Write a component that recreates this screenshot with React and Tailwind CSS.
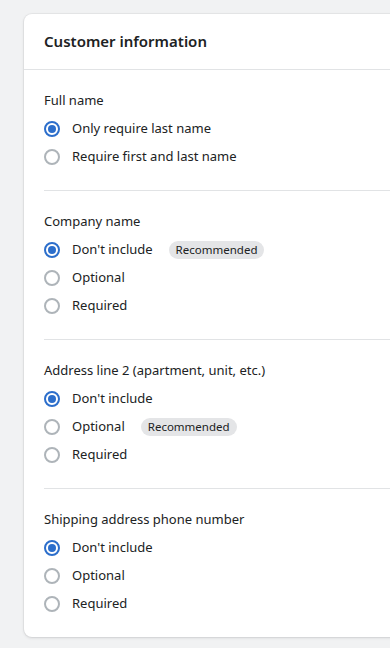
import React, { useState } from "react";

const sections = [
  {
    id: "fullName",
    label: "Full name",
    options: ["Only require last name", "Require first and last name"],
    initial: 0,
  },
  {
    id: "company",
    label: "Company name",
    options: ["Don't include", "Optional", "Required"],
    initial: 0,
    recommended: 0,
  },
  {
    id: "address2",
    label: "Address line 2 (apartment, unit, etc.)",
    options: ["Don't include", "Optional", "Required"],
    initial: 0,
    recommended: 1,
  },
  {
    id: "phone",
    label: "Shipping address phone number",
    options: ["Don't include", "Optional", "Required"],
    initial: 0,
  },
];

function Radio({ checked }) {
  return checked ? (
    <span className="flex h-4 w-4 items-center justify-center rounded-full border-2 border-[#2c6ecb] bg-white">
      <span className="h-2 w-2 rounded-full bg-[#2c6ecb]" />
    </span>
  ) : (
    <span className="h-4 w-4 rounded-full border-2 border-[#aeb4b9] bg-white" />
  );
}

function Section({ section, first }) {
  const [value, setValue] = useState(section.initial);

  return (
    <div className="pl-5">
      <div className={first ? "pt-5 pb-[19px]" : "border-t border-[#e1e3e5] pt-5 pb-[19px]"}>
        <p className="text-[13px] leading-5 text-[#202223]">{section.label}</p>
        <div className="mt-[5px]">
          {section.options.map((opt, i) => (
            <label
              key={opt}
              className="flex h-7 cursor-pointer items-center"
              onClick={() => setValue(i)}
            >
              <Radio checked={value === i} />
              <span className="ml-3 text-[13px] text-[#202223]">{opt}</span>
              {section.recommended === i && (
                <span className="ml-4 rounded-full bg-[#e4e5e7] px-[7px] text-[11.5px] leading-[18px] text-[#202223]">
                  Recommended
                </span>
              )}
            </label>
          ))}
        </div>
      </div>
    </div>
  );
}

export default function App() {
  return (
    <div
      className="min-h-[648px] overflow-hidden bg-[#f1f2f3] pt-[14px] pl-6"
      style={{ fontFamily: '"Noto Sans", "Open Sans", sans-serif' }}
    >
      <div className="w-[420px] rounded-lg bg-white shadow-[0_0_0_1px_rgba(63,63,68,0.05),0_1px_3px_rgba(63,63,68,0.15)]">
        <div className="flex h-14 items-center border-b border-[#e1e3e5] px-5">
          <h2 className="text-[15px] font-semibold text-[#202223]">Customer information</h2>
        </div>
        {sections.map((s, i) => (
          <Section key={s.id} section={s} first={i === 0} />
        ))}
      </div>
    </div>
  );
}
